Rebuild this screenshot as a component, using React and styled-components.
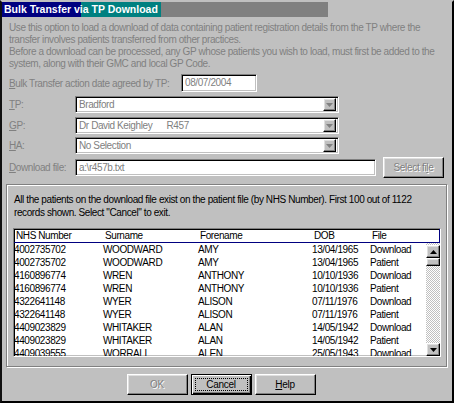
import React from "react";
import styled, { createGlobalStyle, css } from "styled-components";

const Global = createGlobalStyle`
  html, body { margin: 0; padding: 0; background: #c0c0c0; }
  body { font-family: "Liberation Sans", Arial, sans-serif; font-size: 10px; letter-spacing: -0.4px; }
`;

const Window = styled.div`
  box-sizing: border-box;
  width: 454px;
  height: 403px;
  background: #c0c0c0;
  border-top: 2px solid #c0c0c0;
  border-left: 2px solid #101010;
  border-right: 2px solid #000;
  border-bottom: 2px solid #000;
  display: flex;
  flex-direction: column;
  overflow: hidden;
`;

const TitleBar = styled.div`
  width: 326px;
  height: 15px;
  background: linear-gradient(
    to right,
    #000080 0,
    #000080 79px,
    #008080 79px,
    #008080 159px,
    #808080 159px
  );
  color: #fff;
  font-weight: bold;
  font-size: 10.5px;
  letter-spacing: 0;
  line-height: 15px;
  padding-left: 2px;
  box-sizing: border-box;
  white-space: nowrap;
`;

const Intro = styled.div`
  margin: 5px 0 0 7px;
  color: #808080;
  line-height: 12px;
  white-space: nowrap;
`;

const Para = styled.p`
  margin: 0;
`;

const Form = styled.div`
  display: flex;
  flex-direction: column;
  gap: 3px;
  margin: 4px 0 0 7px;
`;

const Row = styled.div`
  display: flex;
  align-items: center;
  height: ${(p) => p.$h || 17}px;
  margin-top: ${(p) => p.$mt || 0}px;
`;

const Label = styled.span`
  width: ${(p) => p.$w || 66}px;
  color: #808080;
  white-space: nowrap;
  flex: none;
`;

const sunken = css`
  box-sizing: border-box;
  background: #fff;
  border-style: solid;
  border-width: 1px;
  border-color: #808080 #fff #fff #808080;
  box-shadow: inset 1px 1px 0 #000, inset -1px -1px 0 #c0c0c0;
`;

const Field = styled.div`
  ${sunken};
  width: ${(p) => p.$w}px;
  height: ${(p) => p.$h || 17}px;
  color: #808080;
  padding-left: 3px;
  line-height: ${(p) => (p.$h || 17) - 2}px;
  white-space: pre;
  flex: none;
`;

const Combo = styled(Field)`
  display: flex;
  justify-content: space-between;
  padding-right: 2px;
  align-items: center;
`;

const raised = css`
  box-sizing: border-box;
  background: #c0c0c0;
  border-style: solid;
  border-width: 1px;
  border-color: #fff #000 #000 #fff;
  box-shadow: inset -1px -1px 0 #808080, inset 1px 1px 0 #dfdfdf;
`;

const ArrowBtn = styled.div`
  ${raised};
  width: 13px;
  height: 13px;
  display: flex;
  align-items: center;
  justify-content: center;
  flex: none;
`;

const Arrow = ({ up, color = "#808080" }) => (
  <svg width="7" height="4" viewBox="0 0 7 4">
    <path d={up ? "M3.5 0 L7 4 L0 4 Z" : "M0 0 L7 0 L3.5 4 Z"} fill={color} />
  </svg>
);

const Button = styled.button`
  ${raised};
  width: ${(p) => p.$w || 61}px;
  height: ${(p) => p.$h || 21}px;
  font-family: "Liberation Sans", Arial, sans-serif;
  font-size: 10px;
  letter-spacing: -0.3px;
  padding: 0;
  color: ${(p) => (p.disabled ? "#808080" : "#000")};
  text-shadow: ${(p) => (p.disabled ? "1px 1px 0 #fff" : "none")};
  ${(p) =>
    p.$default &&
    css`
      border: 1px solid #000;
      box-shadow: inset 1px 1px 0 #fff, inset -1px -1px 0 #000,
        inset -2px -2px 0 #808080;
    `}
  position: relative;
  flex: none;
`;

const Focus = styled.span`
  position: absolute;
  inset: 3px;
  border: 1px dotted #000;
`;

const Group = styled.div`
  margin: 6px 5px 0 4px;
  height: 183px;
  box-sizing: border-box;
  border: 1px solid #808080;
  box-shadow: inset 1px 1px 0 #fff, 1px 1px 0 #fff;
  padding: 8px 5px 0 6px;
  display: flex;
  flex-direction: column;
`;

const Message = styled.div`
  line-height: 13px;
  color: #000;
  white-space: nowrap;
  margin-left: 1px;
`;

const List = styled.div`
  ${sunken};
  margin-top: 9px;
  height: 129px;
  display: flex;
  flex-direction: column;
  overflow: hidden;
`;

const cols = "89px 95px 114px 58px 1fr";

const Header = styled.div`
  display: grid;
  grid-template-columns: ${cols};
  height: 14px;
  line-height: 13px;
  box-sizing: border-box;
  border-right: 1px solid #000080;
  border-bottom: 1px solid #000080;
  padding-left: 2px;
  flex: none;
`;

const Body = styled.div`
  display: flex;
  flex: 1;
  min-height: 0;
`;

const Rows = styled.div`
  flex: 1;
  overflow: hidden;
`;

const DataRow = styled.div`
  display: grid;
  grid-template-columns: ${cols};
  height: 13px;
  line-height: 13px;
  white-space: nowrap;
`;

const Cell = styled.span`
  overflow: visible;
`;

const ScrollBar = styled.div`
  width: 14px;
  display: flex;
  flex-direction: column;
  padding-top: 2px;
  background-color: #e0e0e0;
  background-image: repeating-conic-gradient(#c0c0c0 0 25%, #fff 0 50%);
  background-size: 2px 2px;
`;

const ScrollBtn = styled.div`
  ${raised};
  width: 14px;
  height: 13px;
  display: flex;
  align-items: center;
  justify-content: center;
  flex: none;
`;

const Thumb = styled.div`
  ${raised};
  width: 14px;
  height: 8px;
  flex: none;
`;

const Spacer = styled.div`
  flex: 1;
`;

const ButtonRow = styled.div`
  display: flex;
  justify-content: center;
  gap: 3px;
  margin-top: 7px;
  padding-right: 12px;
`;

const U = styled.u`
  text-decoration: underline;
`;

const rows = [
  ["4002735702", "WOODWARD", "AMY", "13/04/1965", "Download"],
  ["4002735702", "WOODWARD", "AMY", "13/04/1965", "Patient"],
  ["4160896774", "WREN", "ANTHONY", "10/10/1936", "Download"],
  ["4160896774", "WREN", "ANTHONY", "10/10/1936", "Patient"],
  ["4322641148", "WYER", "ALISON", "07/11/1976", "Download"],
  ["4322641148", "WYER", "ALISON", "07/11/1976", "Patient"],
  ["4409023829", "WHITAKER", "ALAN", "14/05/1942", "Download"],
  ["4409023829", "WHITAKER", "ALAN", "14/05/1942", "Patient"],
  ["4409039555", "WORRALL", "ALEN", "25/05/1943", "Download"],
];

export default function App() {
  return (
    <>
      <Global />
      <Window>
        <TitleBar>Bulk Transfer via TP Download</TitleBar>
        <Intro>
          <Para>
            Use this option to load a download of data containing patient registration details from the TP where the
            <br />
            transfer involves patients transferred from other practices.
          </Para>
          <Para>
            Before a download can be processed, any GP whose patients you wish to load, must first be added to the
            <br />
            system, along with their GMC and local GP Code.
          </Para>
        </Intro>
        <Form>
          <Row $h={18}>
            <Label $w={172}>
              <U>B</U>ulk Transfer action date agreed by TP:
            </Label>
            <Field $w={76} $h={18}>08/07/2004</Field>
          </Row>
          <Row $mt={1}>
            <Label>
              <U>T</U>P:
            </Label>
            <Combo $w={264}>
              <span>Bradford</span>
              <ArrowBtn>
                <Arrow />
              </ArrowBtn>
            </Combo>
          </Row>
          <Row $mt={1}>
            <Label>
              <U>G</U>P:
            </Label>
            <Combo $w={264}>
              <span>{"Dr David Keighley      R457"}</span>
              <ArrowBtn>
                <Arrow />
              </ArrowBtn>
            </Combo>
          </Row>
          <Row>
            <Label>
              <U>H</U>A:
            </Label>
            <Combo $w={264}>
              <span>No Selection</span>
              <ArrowBtn>
                <Arrow />
              </ArrowBtn>
            </Combo>
          </Row>
          <Row $h={21}>
            <Label>
              <U>D</U>ownload file:
            </Label>
            <Field $w={301}>a:\r457b.txt</Field>
            <Button disabled style={{ marginLeft: 7 }}>
              Select fi<U>l</U>e
            </Button>
          </Row>
        </Form>
        <Group>
          <Message>
            All the patients on the download file exist on the patient file (by NHS Number). First 100 out of 1122
            <br />
            records shown. Select "Cancel" to exit.
          </Message>
          <List>
            <Header>
              <Cell>NHS Number</Cell>
              <Cell>Surname</Cell>
              <Cell>Forename</Cell>
              <Cell>DOB</Cell>
              <Cell>File</Cell>
            </Header>
            <Body>
              <Rows>
                {rows.map((r, i) => (
                  <DataRow key={i}>
                    {r.map((c, j) => (
                      <Cell key={j}>{c}</Cell>
                    ))}
                  </DataRow>
                ))}
              </Rows>
              <ScrollBar>
                <ScrollBtn>
                  <Arrow up color="#000" />
                </ScrollBtn>
                <Thumb />
                <Spacer />
                <ScrollBtn>
                  <Arrow color="#000" />
                </ScrollBtn>
              </ScrollBar>
            </Body>
          </List>
        </Group>
        <ButtonRow>
          <Button disabled>OK</Button>
          <Button $default>
            <Focus />
            Cancel
          </Button>
          <Button>
            <U>H</U>elp
          </Button>
        </ButtonRow>
      </Window>
    </>
  );
}
